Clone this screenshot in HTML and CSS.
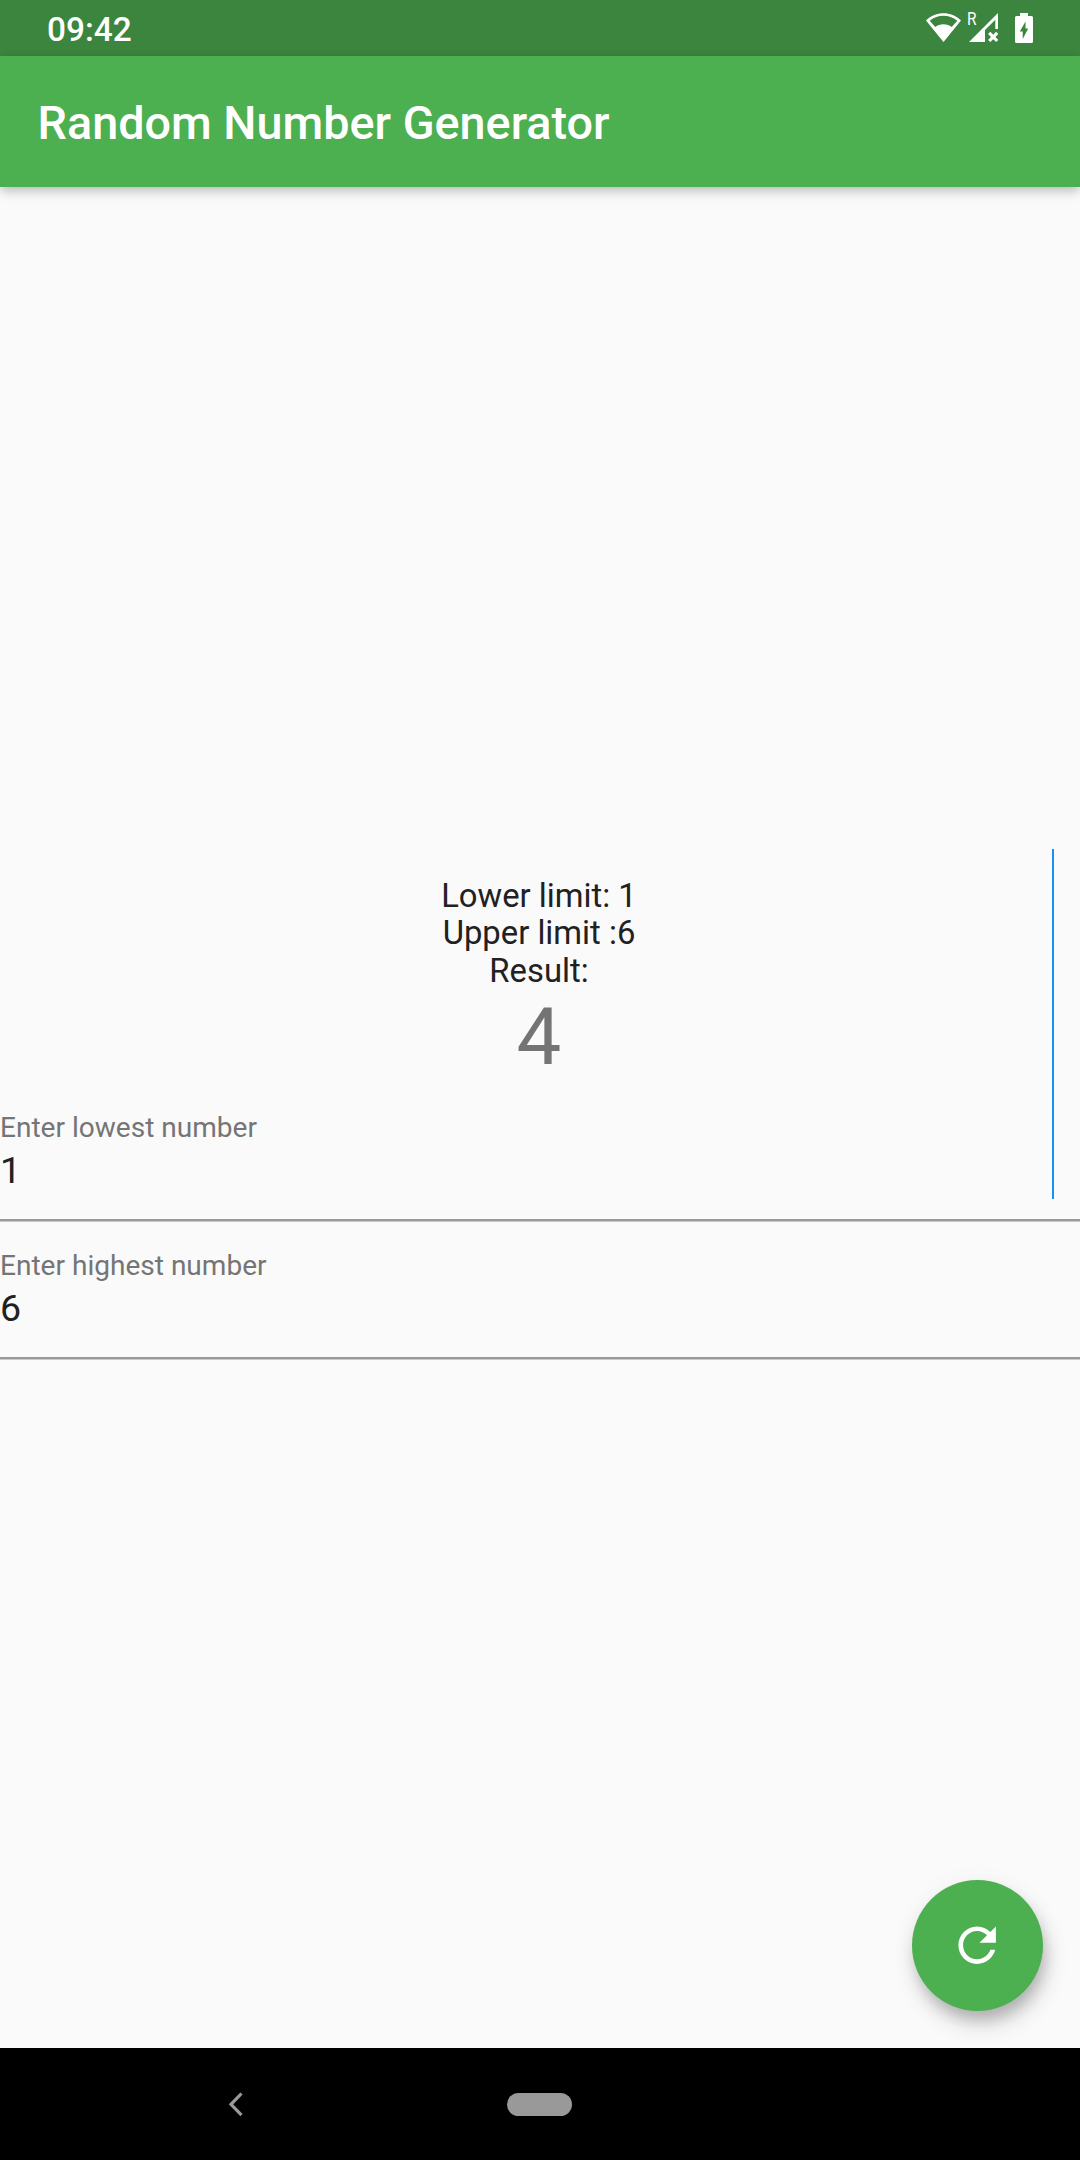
FILE: index.html
```html
<!DOCTYPE html>
<html lang="en">
<head>
<meta charset="utf-8">
<title>Random Number Generator</title>
<link rel="stylesheet" href="styles.css">
</head>
<body>
<div class="screen">
  <div class="status-bar">
    <span class="clock">09:42</span>
    <svg class="status-icons" width="110" height="40" viewBox="925 8 110 40" fill="#fff">
      <path d="M943.500 42 926 20.500C936 10.800 951 10.800 961 20.500ZM935.300 27C939.500 23.300 947.500 23.300 951.700 27L957.300 20.700C949 14 938 14 929.700 20.700Z" fill-rule="evenodd"/>
      <path d="M969 42 998 13V29H995.300V19.800L985 30V42Z"/>
      <path d="M989.200 32.800 997.200 41M997.200 32.800 989.200 41" stroke="#fff" stroke-width="3.200"/>
      <path d="M1020 13H1028V16H1031.500Q1033 16 1033 17.500V41.500Q1033 43 1031.500 43H1016.500Q1015 43 1015 41.500V17.500Q1015 16 1016.500 16H1020ZM1025.500 21.500 1019.800 31.500H1022.700V39L1028.200 28.500H1025.500Z" fill-rule="evenodd"/>
      <text class="roaming" x="967" y="25.300" textLength="9.500" lengthAdjust="spacingAndGlyphs">R</text>
    </svg>
  </div>
  <header class="app-bar"><h1 class="title">Random Number Generator</h1></header>
  <main class="content">
    <div class="summary">
      <div class="line">Lower limit: 1</div>
      <div class="line">Upper limit :6</div>
      <div class="line">Result:</div>
      <div class="result">4</div>
    </div>
    <div class="field">
      <div class="label">Enter lowest number</div>
      <div class="value">1</div>
    </div>
    <div class="field">
      <div class="label">Enter highest number</div>
      <div class="value">6</div>
    </div>
    <div class="cursor-line"></div>
    <button class="fab" aria-label="Generate">
      <svg width="56.250" height="56.250" viewBox="0 0 24 24" fill="#fff"><path d="M17.650 6.350C16.200 4.900 14.210 4 12 4c-4.420 0-7.990 3.580-7.990 8s3.570 8 7.990 8c3.730 0 6.840-2.550 7.730-6h-2.080c-.82 2.330-3.040 4-5.650 4-3.310 0-6-2.690-6-6s2.690-6 6-6c1.660 0 3.140.69 4.220 1.780L13 11h7V4l-2.350 2.350z"/></svg>
    </button>
  </main>
  <nav class="nav-bar">
    <svg class="back" width="16" height="26" viewBox="0 0 16 26"><path d="M13.500 2.500 3 13.300 13.500 24.200" fill="none" stroke="#999" stroke-width="3.200"/></svg>
    <div class="home"></div>
  </nav>
</div>
</body>
</html>
```
FILE: styles.css
```css
* { box-sizing: border-box; }
body { margin: 0; font-family: Roboto, sans-serif; background: #fafafa; }
.screen { width: 1080px; height: 2160px; display: flex; flex-direction: column; overflow: hidden; }
.status-bar {
  height: 56px; flex: none; background: #3b853e; color: #fff;
  display: flex; align-items: center; justify-content: space-between; padding: 0 45px 0 47px;
}
.clock { font-size: 33.4px; font-weight: 500; line-height: 38px; padding-top: 3px; }
.roaming { font-size: 18.5px; }
.app-bar {
  height: 131px; flex: none; background: #4caf50; color: #fff; position: relative; z-index: 1;
  display: flex; align-items: center; padding: 2px 0 0 37.5px;
  box-shadow: 0 4px 10px -1px rgba(0,0,0,.18), 0 8px 12px rgba(0,0,0,.05), 0 2px 10px rgba(0,0,0,.06);
}
.title { margin: 0; font-size: 46.75px; font-weight: 500; line-height: 56px; white-space: nowrap; }
.content { flex: 1; position: relative; background: #fafafa; padding-top: 690.5px; }
.summary { text-align: center; padding-right: 2px; }
.line { font-size: 32.8px; line-height: 37.5px; color: #212121; }
.result { font-size: 79.7px; line-height: 93.5px; color: #747474; }
.field {
  height: 137.8px; padding-top: 27.5px; border-bottom: 2px solid #999;
  box-shadow: 0 1px 0 #c8c8c8; display: flex; flex-direction: column; gap: 4px;
}
.label { font-size: 28.05px; line-height: 33px; color: #757575; }
.value { font-size: 37.5px; line-height: 44px; color: #212121; }
.cursor-line { position: absolute; left: 1052px; top: 662px; width: 2px; height: 350px; background: #1890f5; }
.fab {
  position: absolute; right: 37px; bottom: 37px; width: 131px; height: 131px;
  border: 0; padding: 0; border-radius: 50%; background: #4caf50;
  display: flex; align-items: center; justify-content: center;
  box-shadow: 3px 10px 14px -2px rgba(0,0,0,.18), 4px 14px 23px rgba(0,0,0,.14), 0 2px 30px rgba(0,0,0,.03);
}
.nav-bar { height: 112px; flex: none; background: #000; display: flex; align-items: center; padding-left: 228px; }
.home { width: 65px; height: 23px; border-radius: 11.5px; background: #999; margin-left: 263px; }
```
